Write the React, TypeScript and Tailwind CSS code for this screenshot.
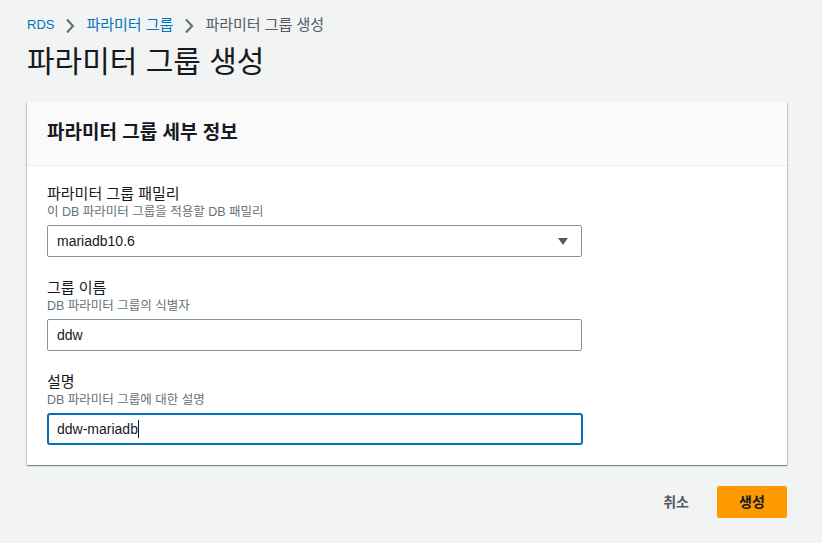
const font = { fontFamily: '"Liberation Sans", "Noto Sans CJK KR", sans-serif' };

function Chevron() {
    return (
        <svg width="10" height="16" viewBox="0 0 10 16" className="mx-[11px] mt-[2px]">
            <path d="M2 1.5l6 6.5-6 6.5" fill="none" stroke="#687078" strokeWidth="2.2" />
        </svg>
    );
}

function Field({ label, desc, children }: { label: string; desc: string; children: React.ReactNode }) {
    return (
        <div className="flex flex-col">
            <div className="text-[15px] leading-[20px] text-[#16191f]">{label}</div>
            <div className="text-[12.5px] leading-[16px] text-[#687078] mb-[5px]">{desc}</div>
            {children}
        </div>
    );
}

export default function App() {
    return (
        <div className="w-[822px] h-[543px] bg-[#f2f3f3] overflow-hidden" style={font}>
            <div className="pl-[27px] pr-[35px] pt-[15px]">
                {/* Breadcrumb */}
                <div className="flex items-center text-[15px] leading-[20px]">
                    <span className="text-[#0073bb] text-[13px]">RDS</span>
                    <Chevron />
                    <span className="text-[#0073bb]">파라미터 그룹</span>
                    <Chevron />
                    <span className="text-[#545b64]">파라미터 그룹 생성</span>
                </div>

                {/* Title */}
                <h1 className="text-[30px] leading-[36px] text-[#16191f] mt-[9px]">파라미터 그룹 생성</h1>

                {/* Card */}
                <div className="mt-[22px] bg-white shadow-[0_1px_1px_0_rgba(0,28,36,0.3),1px_1px_1px_0_rgba(0,28,36,0.15),-1px_1px_1px_0_rgba(0,28,36,0.15)]">
                    <div className="h-[64px] bg-[#fafafa] border-b border-[#eaeded] px-[20px] flex items-center">
                        <h2 className="text-[19px] font-bold text-[#16191f]">파라미터 그룹 세부 정보</h2>
                    </div>
                    <div className="px-[20px] pt-[18px] pb-[20px] flex flex-col gap-[21px]">
                        <Field label="파라미터 그룹 패밀리" desc="이 DB 파라미터 그룹을 적용할 DB 패밀리">
                            <div className="w-[535px] h-[32px] border border-[#879596] rounded-[2px] flex items-center justify-between pl-[9px] pr-[12px]">
                                <span className="text-[14px] text-[#16191f]">mariadb10.6</span>
                                <svg width="12" height="9" viewBox="0 0 12 9">
                                    <path d="M1 1h10L6 8z" fill="#545b64" />
                                </svg>
                            </div>
                        </Field>
                        <Field label="그룹 이름" desc="DB 파라미터 그룹의 식별자">
                            <div className="w-[535px] h-[32px] border border-[#879596] rounded-[2px] flex items-center pl-[9px]">
                                <span className="text-[14px] text-[#16191f]">ddw</span>
                            </div>
                        </Field>
                        <Field label="설명" desc="DB 파라미터 그룹에 대한 설명">
                            <div className="w-[536px] h-[32px] border-2 border-[#0073bb] rounded-[3px] flex items-center pl-[8px]">
                                <span className="text-[14px] text-[#16191f]">ddw-mariadb</span>
                                <span className="w-[1px] h-[18px] bg-[#16191f]" />
                            </div>
                        </Field>
                    </div>
                </div>

                {/* Actions */}
                <div className="flex justify-end items-center mt-[21px] gap-[8px]">
                    <button className="px-[20px] h-[32px] text-[14px] font-bold text-[#545b64]">취소</button>
                    <button className="w-[70px] h-[32px] bg-[#ff9900] rounded-[2px] text-[14px] font-bold text-[#16191f]">생성</button>
                </div>
            </div>
        </div>
    );
}
